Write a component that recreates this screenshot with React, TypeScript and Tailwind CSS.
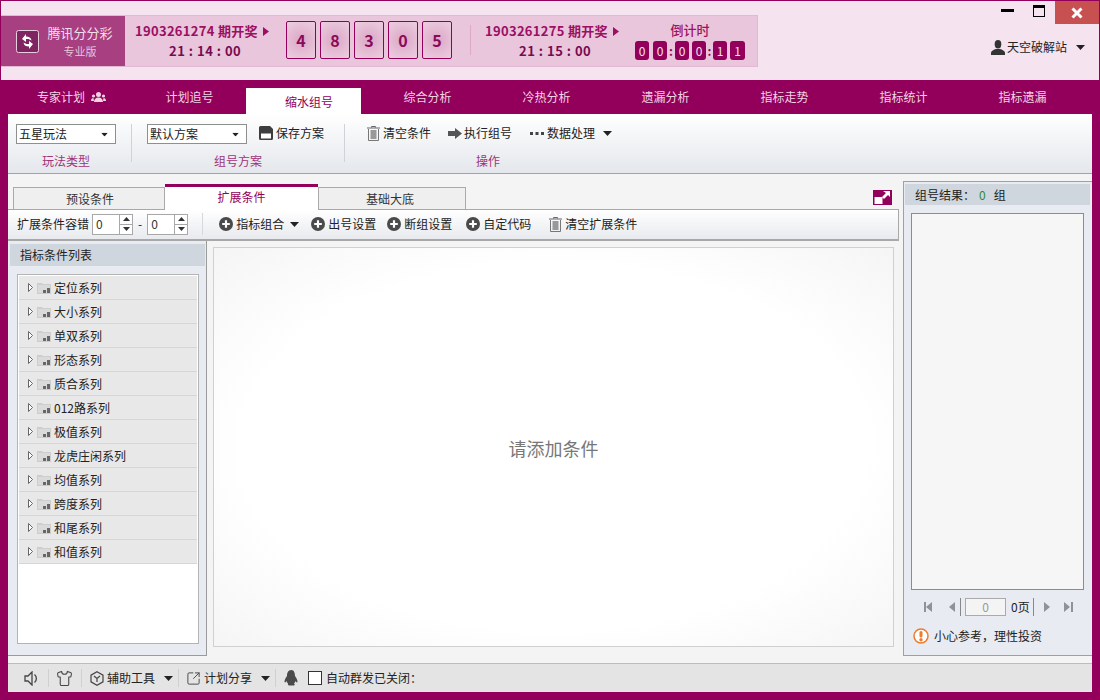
import { Shirt, SquareArrowOutUpRight } from "lucide-react";

const font = { fontFamily: '"Noto Sans CJK SC", "Liberation Sans", sans-serif' };

const navItems = ["计划追号", "缩水组号", "综合分析", "冷热分析", "遗漏分析", "指标走势", "指标统计", "指标遗漏"];
const seriesList = [
  "定位系列",
  "大小系列",
  "单双系列",
  "形态系列",
  "质合系列",
  "012路系列",
  "极值系列",
  "龙虎庄闲系列",
  "均值系列",
  "跨度系列",
  "和尾系列",
  "和值系列",
];

function Caret({ className = "" }: { className?: string }) {
  return (
    <svg width="9" height="5" viewBox="0 0 9 5" className={className}>
      <path d="M0 0h9L4.500 5z" fill="#222" />
    </svg>
  );
}

function Plus({ className = "" }: { className?: string }) {
  return (
    <svg width="14" height="14" viewBox="0 0 14 14" className={className}>
      <circle cx="7" cy="7" r="7" fill="#4a4a4a" />
      <path d="M7 3.200v7.600M3.200 7h7.600" stroke="#fff" strokeWidth="2.200" />
    </svg>
  );
}

function TrashIcon({ className = "" }: { className?: string }) {
  return (
    <svg width="13" height="15" viewBox="0 0 13 15" className={className}>
      <path d="M4.500 1.500V.5h4v1M0 2h13" fill="none" stroke="#666" strokeWidth="1" />
      <path d="M1.500 3v11.500h10V3" fill="none" stroke="#777" strokeWidth="1" />
      <rect x="3.500" y="4" width="6" height="9" fill="#999" />
    </svg>
  );
}

function Spin({ value }: { value: string }) {
  return (
    <div className="flex h-[21px] w-[41px] items-center border border-[#a8a8a8] bg-white">
      <span className="flex-1 pl-[3px] text-xs text-[#333]">{value}</span>
      <div className="flex h-full w-[13px] flex-col border-l border-[#a8a8a8]">
        <div className="flex flex-1 items-center justify-center border-b border-[#a8a8a8]">
          <svg width="7" height="4" viewBox="0 0 7 4">
            <path d="M0 4h7L3.500 0z" fill="#333" />
          </svg>
        </div>
        <div className="flex flex-1 items-center justify-center">
          <svg width="7" height="4" viewBox="0 0 7 4">
            <path d="M0 0h7L3.500 4z" fill="#333" />
          </svg>
        </div>
      </div>
    </div>
  );
}

function Select({ label }: { label: string }) {
  return (
    <div className="flex h-[20px] w-[100px] items-center justify-between border border-[#8f8f8f] bg-white pl-[2px] pr-[6px] text-xs text-[#222]">
      <span>{label}</span>
      <Caret className="scale-75" />
    </div>
  );
}

function FolderIcon() {
  return (
    <svg width="14" height="12" viewBox="0 0 14 12" className="ml-[4px]">
      <path d="M0 1h5l1 1h8v10H0z" fill="#cdcdcd" />
      <rect x="1" y="3" width="12" height="8" fill="#dadada" />
      <rect x="6" y="8" width="3" height="3" fill="#666" />
      <rect x="10" y="6" width="3" height="5" fill="#666" />
    </svg>
  );
}

function PageArrow({ dir, bar }: { dir: "left" | "right"; bar?: boolean }) {
  const tri = dir === "left" ? "M8 0v10L2 5z" : "M0 0v10l6-5z";
  return (
    <svg width="9" height="10" viewBox="0 0 9 10">
      <path d={tri} fill="#8c939b" />
      {bar && <rect x={dir === "left" ? 0 : 7} y="0" width="2" height="10" fill="#8c939b" />}
    </svg>
  );
}

function Header() {
  return (
    <div className="mx-px flex h-[79px] bg-[#f5e3ef]">
      <div className="mt-[14px] flex h-[52px] w-[757px] border border-l-0 border-[#e2b9d2] bg-[#e9c6db]">
        <div className="flex w-[124px] items-center bg-[#a83f80] pl-[15px]">
          <svg width="23" height="23" viewBox="0 0 23 23">
            <rect x="0.500" y="0.500" width="22" height="22" rx="2" fill="#7f2460" stroke="#e8cfdf" />
            <path d="M6 9l4-5v2.500c3 0 5 1 5.500 4l-3-1.500H10V12z" fill="#fff" />
            <path d="M17 14l-4 5v-2.500c-3 0-5-1-5.500-4l3 1.500H13V11z" fill="#fff" />
          </svg>
          <div className="ml-[8px] flex w-[66px] flex-col items-center text-[#f3dfeb]">
            <span className="text-[13px] leading-[20px]">腾讯分分彩</span>
            <span className="text-[11px] leading-[16px] text-[#e6c4d9]">专业版</span>
          </div>
        </div>
        <div className="flex w-[137px] flex-col pl-[10px] pt-[5px] font-bold text-[#9c0f63]">
          <div className="flex w-max items-center whitespace-nowrap text-[13px] leading-[20px] tracking-[0.3px]">
            1903261274 期开奖
            <svg width="6" height="9" viewBox="0 0 6 9" className="ml-[5px] shrink-0">
              <path d="M0 0l6 4.500L0 9z" fill="#9c0f63" />
            </svg>
          </div>
          <span className="ml-[34px] text-[13px] leading-[20px] tracking-[0.5px] text-[#7a0a50]">21 : 14 : 00</span>
        </div>
        <div className="ml-[24px] mt-[5px] flex h-[38px] gap-[4px]">
          {["4", "8", "3", "0", "5"].map((n, i) => (
            <div
              key={i}
              className="flex w-[30px] items-center justify-center rounded-[2px] border border-[#93005b] bg-[radial-gradient(circle,#dfaecb_20%,#eccfe0_100%)] text-base font-bold text-[#8a0a57]"
            >
              {n}
            </div>
          ))}
        </div>
        <div className="ml-[18px] mt-[9px] h-[30px] w-px bg-[#d9a9c6]" />
        <div className="ml-[14px] flex w-[133px] flex-col pt-[5px] font-bold text-[#9c0f63]">
          <div className="flex w-max items-center whitespace-nowrap text-[13px] leading-[20px] tracking-[0.3px]">
            1903261275 期开奖
            <svg width="6" height="9" viewBox="0 0 6 9" className="ml-[5px] shrink-0">
              <path d="M0 0l6 4.500L0 9z" fill="#9c0f63" />
            </svg>
          </div>
          <span className="ml-[34px] text-[13px] leading-[20px] tracking-[0.5px] text-[#7a0a50]">21 : 15 : 00</span>
        </div>
        <div className="ml-[17px] flex w-[110px] flex-col items-center pt-[5px]">
          <span className="text-[13px] font-medium leading-[18px] text-[#a0115f]">倒计时</span>
          <div className="mt-[2px] flex h-[19px] items-center text-xs text-[#f5e3ef]">
            <span className="flex h-full w-[14px] items-center justify-center rounded-[3px] bg-[#93005b]">0</span>
            <span className="ml-[4px] flex h-full w-[14px] items-center justify-center rounded-[3px] bg-[#93005b]">0</span>
            <span className="w-[8px] text-center font-bold text-[#8a0a57]">:</span>
            <span className="flex h-full w-[14px] items-center justify-center rounded-[3px] bg-[#93005b]">0</span>
            <span className="ml-[3px] flex h-full w-[14px] items-center justify-center rounded-[3px] bg-[#93005b]">0</span>
            <span className="w-[7px] text-center font-bold text-[#8a0a57]">:</span>
            <span className="flex h-full w-[14px] items-center justify-center rounded-[3px] bg-[#93005b]">1</span>
            <span className="ml-[3px] flex h-full w-[15px] items-center justify-center rounded-[3px] bg-[#93005b]">1</span>
          </div>
        </div>
      </div>
      <div className="flex flex-1 flex-col">
        <div className="flex h-[23px] items-start justify-end">
          <div className="mr-[19px] mt-[8px] h-[3px] w-[13px] bg-black" />
          <div className="mr-[10px] mt-[4px] h-[12px] w-[12px] border border-black border-t-[3px]" />
          <div className="flex h-[23px] w-[44px] items-center justify-center bg-[#c75050]">
            <svg width="12" height="12" viewBox="0 0 12 12">
              <path d="M1.500 1.500l9 9M10.500 1.500l-9 9" stroke="#fff" strokeWidth="3" />
            </svg>
          </div>
        </div>
        <div className="ml-[233px] mt-[14px] flex h-[18px] items-center text-xs text-[#222]">
          <svg width="14" height="15" viewBox="0 0 14 15">
            <ellipse cx="7" cy="4.200" rx="3.300" ry="4.200" fill="#333" />
            <path d="M0 15v-2c0-2 3-3.500 5-4h4c2 .5 5 2 5 4v2z" fill="#333" />
          </svg>
          <span className="ml-[2px]">天空破解站</span>
          <Caret className="ml-[9px]" />
        </div>
      </div>
    </div>
  );
}

function Nav() {
  return (
    <div className="flex h-[34px] bg-[#93005b] pl-[12px] text-xs text-[#f2d3e4]">
      <div className="flex w-[119px] items-center justify-center pb-[1px]">
        专家计划
        <svg width="15" height="10" viewBox="0 0 15 10" className="ml-[6px]">
          <circle cx="7.500" cy="2.500" r="2.500" fill="#f2d3e4" />
          <path d="M3 10c0-3 2-4.500 4.500-4.500S12 7 12 10z" fill="#f2d3e4" />
          <circle cx="2.500" cy="4" r="1.600" fill="#f2d3e4" />
          <circle cx="12.500" cy="4" r="1.600" fill="#f2d3e4" />
          <path d="M0 9c0-2 1-3 2.500-3L3 9zM15 9c0-2-1-3-2.500-3L12 9z" fill="#f2d3e4" />
        </svg>
      </div>
      {navItems.map((name) =>
        name === "缩水组号" ? (
          <div key={name} className="-ml-[4px] mr-[8px] mt-[8px] flex h-[26px] w-[115px] items-center justify-center bg-white pl-[11px] pt-[1px] text-[#93005b]">
            {name}
          </div>
        ) : (
          <div key={name} className="flex w-[119px] items-center justify-center pb-[1px] pr-[2px]">
            {name}
          </div>
        ),
      )}
    </div>
  );
}

function Toolbar() {
  return (
    <div className="mx-[8px] flex h-[60px] border-b border-[#a0a4aa] bg-linear-to-b from-white to-[#e4e7ec] text-xs text-[#222] shadow-[0_1px_0_#d4d4d4]">
      <div className="flex w-[123px] flex-col pl-[8px] pt-[10px]">
        <Select label="五星玩法" />
        <span className="mt-[8px] w-[100px] text-center leading-[18px] text-[#a0337a]">玩法类型</span>
      </div>
      <div className="mt-[10px] h-[38px] w-px bg-[#cfd2d8]" />
      <div className="ml-[15px] flex w-[197px] flex-col pt-[10px]">
        <div className="flex items-center">
          <Select label="默认方案" />
          <svg width="14" height="14" viewBox="0 0 14 14" className="ml-[12px] -mt-[2px]">
            <path d="M0 1.500A1.500 1.500 0 0 1 1.500 0H11l3 3v9.500A1.500 1.500 0 0 1 12.500 14h-11A1.500 1.500 0 0 1 0 12.500z" fill="#3d3d3d" />
            <rect x="2" y="7.500" width="10" height="5" fill="#fff" />
          </svg>
          <span className="ml-[3px] -mt-[2px]">保存方案</span>
        </div>
        <span className="mt-[8px] w-[182px] text-center leading-[18px] text-[#a0337a]">组号方案</span>
      </div>
      <div className="mt-[10px] h-[38px] w-px bg-[#cfd2d8]" />
      <div className="flex w-[290px] flex-col pt-[10px]">
        <div className="ml-[22px] flex h-[20px] items-center">
          <TrashIcon className="-mt-[2px]" />
          <span className="ml-[3px] -mt-[2px]">清空条件</span>
          <svg width="14" height="11" viewBox="0 0 14 11" className="ml-[17px] -mt-[1px]">
            <path d="M0 3h7V0l7 5.500L7 11V8H0z" fill="#555" />
          </svg>
          <span className="ml-[2px] -mt-[2px]">执行组号</span>
          <svg width="14" height="3" viewBox="0 0 14 3" className="ml-[18px] -mt-[1px]">
            <path d="M0 0h3v3H0zM5.500 0h3v3h-3zM11 0h3v3h-3z" fill="#444" />
          </svg>
          <span className="ml-[3px] -mt-[2px]">数据处理</span>
          <Caret className="ml-[8px] -mt-[1px]" />
        </div>
        <span className="mt-[8px] pl-[131px] leading-[18px] text-[#a0337a]">操作</span>
      </div>
    </div>
  );
}

function LeftPanel() {
  return (
    <div className="h-[415px] w-[199px] border-r border-b border-[#9a9a9a] bg-[#e8ebf2] pl-[2px] pr-px pt-[3px]">
      <div className="h-[22px] bg-[#cfd6de] pl-[10px] text-xs leading-[21px] text-[#222]">指标条件列表</div>
      <div className="ml-[7px] mt-[8px] h-[370px] w-[182px] border border-[#b4b4b4] bg-white p-px">
        {seriesList.map((name) => (
          <div key={name} className="flex h-[24px] items-center border-b border-[#d6d6d6] bg-[#e8e8e8] pl-[9px] text-xs text-[#222]">
            <svg width="5" height="9" viewBox="0 0 5 9">
              <path d="M.5.500l4 4-4 4z" fill="#fff" stroke="#666" />
            </svg>
            <FolderIcon />
            <span className="ml-[3px]">{name}</span>
          </div>
        ))}
      </div>
    </div>
  );
}

function ConditionArea() {
  return (
    <div className="flex w-[891px] flex-col pt-[10px]">
      <div className="flex h-[25px] items-end pl-[5px] text-xs text-[#333]">
        <div className="flex h-[22px] w-[152px] items-center justify-center border border-b-0 border-[#aaa] bg-[#efefef] pl-[2px]">预设条件</div>
        <div className="relative z-10 -mb-px flex h-[26px] w-[153px] items-start justify-center border-t-[3px] border-[#93005b] bg-white pt-[2px] text-[#93005b]">扩展条件</div>
        <div className="flex h-[22px] w-[148px] items-center justify-center border border-b-0 border-[#aaa] bg-[#efefef] pr-[4px]">基础大底</div>
        <div className="ml-auto mb-[4px] mr-[7px] flex h-[15px] w-[19px] items-center justify-center bg-[#93005b]">
          <svg width="19" height="15" viewBox="0 0 19 15">
            <rect x="1.500" y="7" width="8" height="7" fill="#fff" />
            <path d="M10 1h7v6l-2-2-4 4-2-2 4-4z" fill="#fff" />
          </svg>
        </div>
      </div>
      <div className="flex h-[32px] items-center border border-[#a8a8a8] border-b-2 border-l-0 bg-linear-to-b from-white to-[#e8eaee] pb-px pl-[9px] text-xs text-[#222]">
        <span>扩展条件容错</span>
        <div className="ml-[3px]"><Spin value="0" /></div>
        <span className="mx-[5px]">-</span>
        <Spin value="0" />
        <div className="ml-[14px] h-[22px] w-px bg-[#d5d8dc]" />
        <Plus className="ml-[16px]" />
        <span className="ml-[3px]">指标组合</span>
        <Caret className="ml-[6px]" />
        <Plus className="ml-[12px]" />
        <span className="ml-[3px]">出号设置</span>
        <Plus className="ml-[11px]" />
        <span className="ml-[3px]">断组设置</span>
        <Plus className="ml-[14px]" />
        <span className="ml-[3px]">自定代码</span>
        <TrashIcon className="ml-[18px]" />
        <span className="ml-[3px]">清空扩展条件</span>
      </div>
      <div className="flex">
        <LeftPanel />
        <div className="ml-[6px] mt-[6px] flex h-[400px] w-[681px] items-center justify-center border border-[#d0d0d0] bg-[radial-gradient(ellipse_at_center,#ffffff_65%,#f5f5f5_100%)] pt-[2px] text-lg text-[#777]">
          请添加条件
        </div>
      </div>
    </div>
  );
}

function ResultPanel() {
  return (
    <div className="ml-[4px] mt-[7px] h-[475px] w-[189px] border-l border-t border-b border-[#a0a0a0] bg-[#e8ebf2] pl-px pt-[2px] text-xs text-[#222]">
      <div className="mr-[2px] flex h-[21px] items-center bg-[#cfd6de] pl-[10px]">
        组号结果：
        <span className="ml-[4px] text-[#2e8b2e]">0</span>
        <span className="ml-[8px]">组</span>
      </div>
      <div className="ml-[6px] mt-[8px] h-[377px] w-[173px] border border-[#8c8c8c] bg-[#f6f6f6]" />
      <div className="mt-[8px] flex h-[18px] items-center pl-[19px]">
        <PageArrow dir="left" bar />
        <span className="ml-[14px]"><PageArrow dir="left" /></span>
        <div className="ml-[4px] h-[18px] w-px bg-[#888]" />
        <div className="ml-[4px] flex h-[18px] w-[41px] items-center justify-center border border-[#aaa] bg-[#f4f4f4] text-[#999]">0</div>
        <span className="ml-[5px]">0页</span>
        <div className="ml-[3px] h-[18px] w-px bg-[#888]" />
        <span className="ml-[10px]"><PageArrow dir="right" /></span>
        <span className="ml-[11px]"><PageArrow dir="right" bar /></span>
      </div>
      <div className="ml-[8px] mt-[11px] flex h-[18px] items-center">
        <svg width="16" height="16" viewBox="0 0 16 16">
          <circle cx="8" cy="8" r="7" fill="#fff" stroke="#ef7b2d" strokeWidth="1.500" />
          <rect x="6.500" y="3" width="3" height="6.500" rx="1.500" fill="#ef7b2d" />
          <circle cx="8" cy="11.800" r="1.700" fill="#ef7b2d" />
        </svg>
        <span className="ml-[5px]">小心参考，理性投资</span>
      </div>
    </div>
  );
}

function Footer() {
  return (
    <div className="mx-[8px] flex h-[29px] items-center border-t border-[#bdbdbd] bg-[#e4e4e4] text-xs text-[#222]">
      <svg width="15" height="15" viewBox="0 0 15 15" className="ml-[16px]">
        <path d="M1 5h3l4-4v13l-4-4H1z" fill="none" stroke="#444" strokeWidth="1.300" />
        <path d="M10.500 3.500c2.500 2 2.500 6 0 8" fill="none" stroke="#444" strokeWidth="1.300" />
      </svg>
      <div className="ml-[9px] h-[18px] w-px bg-[#d0d0d0]" />
      <Shirt size={17} strokeWidth={1.500} className="ml-[7px] text-[#444]" />
      <div className="ml-[8px] h-[18px] w-px bg-[#d0d0d0]" />
      <svg width="14" height="15" viewBox="0 0 14 15" className="ml-[8px]">
        <path d="M7 .8l6 3.400v6.600l-6 3.400-6-3.400V4.200z" fill="none" stroke="#444" strokeWidth="1.200" />
        <path d="M4 5l3 2.500L10 5M7 7.500V11" fill="none" stroke="#444" strokeWidth="1.200" />
      </svg>
      <span className="ml-[3px]">辅助工具</span>
      <Caret className="ml-[9px]" />
      <div className="ml-[5px] h-[18px] w-px bg-[#d0d0d0]" />
      <SquareArrowOutUpRight size={15} strokeWidth={1.500} className="ml-[7px] text-[#444]" />
      <span className="ml-[3px]">计划分享</span>
      <Caret className="ml-[9px]" />
      <div className="ml-[5px] h-[18px] w-px bg-[#d0d0d0]" />
      <svg width="15" height="17" viewBox="0 0 15 17" className="ml-[8px]">
        <path d="M7.500 0C4 0 3 3 3 6c-1.500 2-2.500 4-2.500 6 .5 1 1.500 0 2-1 .3 1.200 1 2 1.500 2.500C3.500 14.500 4 16 7.500 15.500 11 16 11.500 14.500 10 13.500c.5-.5 1.200-1.300 1.500-2.500.5 1 1.500 2 2 1 0-2-1-4-2.500-6 0-3-1-6-3.500-6z" fill="#4a4a4a" />
      </svg>
      <div className="ml-[9px] h-[14px] w-[14px] border border-[#333] bg-white" />
      <span className="ml-[4px]">自动群发已关闭：</span>
    </div>
  );
}

export default function App() {
  return (
    <div style={font} className="flex h-[700px] w-[1100px] flex-col overflow-hidden bg-[#93005b] pt-px">
      <Header />
      <Nav />
      <Toolbar />
      <div className="mx-[8px] flex h-[489px] bg-[#f4f4f4]">
        <ConditionArea />
        <ResultPanel />
      </div>
      <Footer />
    </div>
  );
}
